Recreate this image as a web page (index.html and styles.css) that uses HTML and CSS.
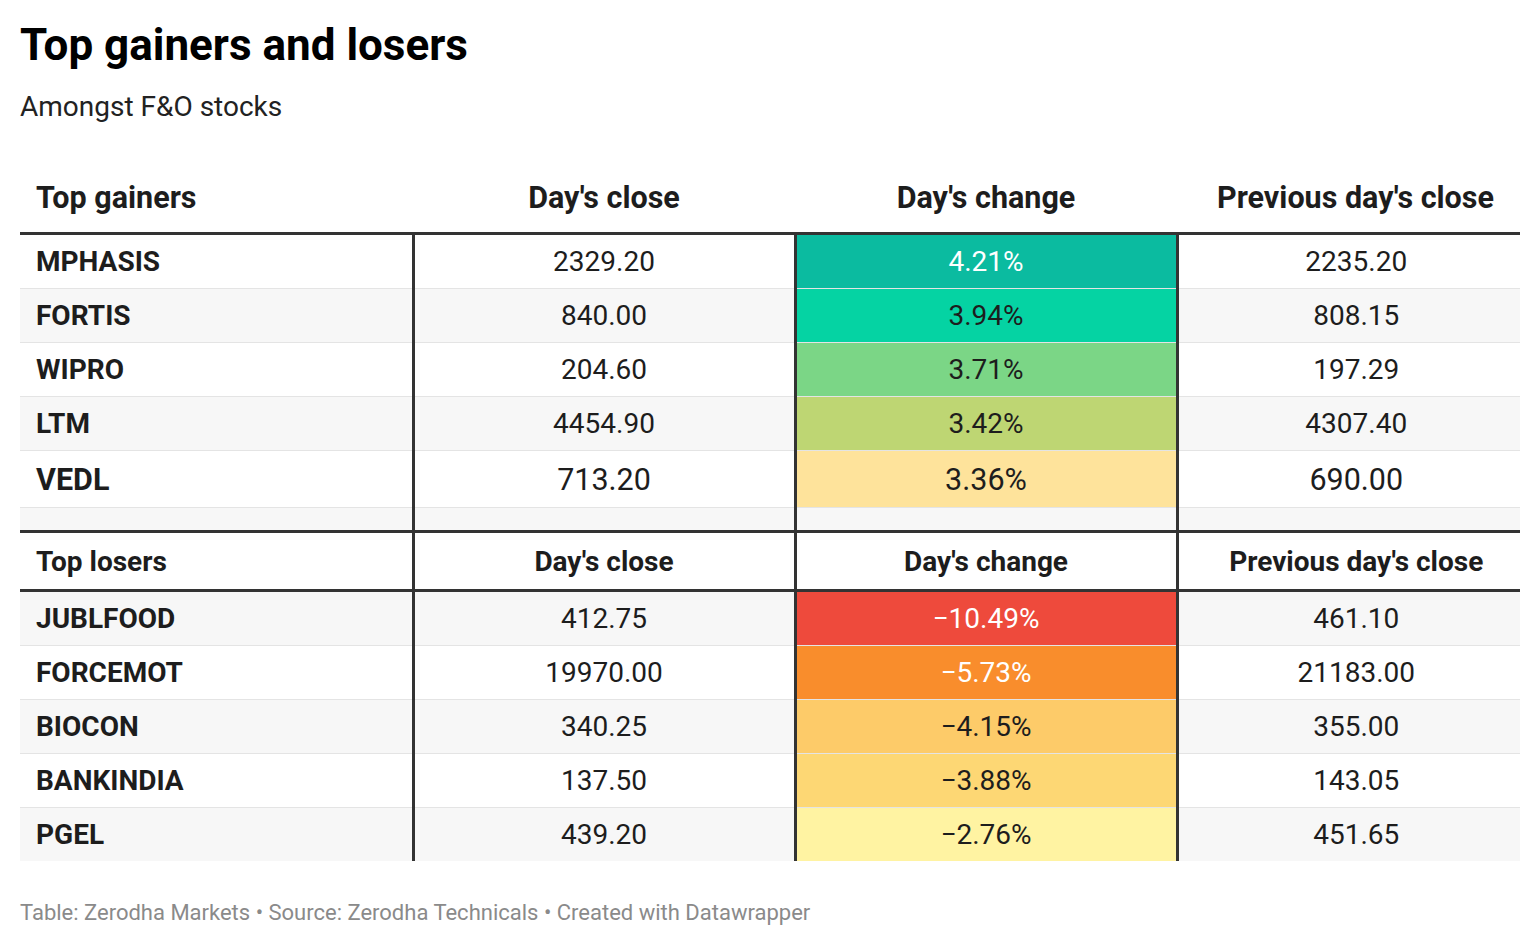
FILE: index.html
```html
<!DOCTYPE html>
<html>
<head>
<meta charset="utf-8">
<link rel="stylesheet" href="styles.css">
</head>
<body>
<div class="page">
  <h1 class="title">Top gainers and losers</h1>
  <p class="subtitle">Amongst F&amp;O stocks</p>
  <table class="tbl">
    <colgroup>
      <col class="c1"><col class="c2"><col class="c3"><col class="c4">
    </colgroup>
    <thead>
      <tr class="head-main">
        <th class="name">Top gainers</th>
        <th>Day's close</th>
        <th>Day's change</th>
        <th class="last-col">Previous day's close</th>
      </tr>
    </thead>
    <tbody>
      <tr class="row"><td class="name">MPHASIS</td><td>2329.20</td><td class="chg light" style="background:#0bbba0">4.21%</td><td class="last-col">2235.20</td></tr>
      <tr class="row alt"><td class="name">FORTIS</td><td>840.00</td><td class="chg" style="background:#05d3a3">3.94%</td><td class="last-col">808.15</td></tr>
      <tr class="row"><td class="name">WIPRO</td><td>204.60</td><td class="chg" style="background:#7bd686">3.71%</td><td class="last-col">197.29</td></tr>
      <tr class="row alt"><td class="name">LTM</td><td>4454.90</td><td class="chg" style="background:#bed673">3.42%</td><td class="last-col">4307.40</td></tr>
      <tr class="row big"><td class="name">VEDL</td><td>713.20</td><td class="chg" style="background:#fee39b">3.36%</td><td class="last-col">690.00</td></tr>
      <tr class="blank alt"><td></td><td></td><td></td><td></td></tr>
      <tr class="subhead"><td class="name">Top losers</td><td>Day's close</td><td>Day's change</td><td class="last-col">Previous day's close</td></tr>
      <tr class="row alt first"><td class="name">JUBLFOOD</td><td>412.75</td><td class="chg light" style="background:#ee4a3c">−10.49%</td><td class="last-col">461.10</td></tr>
      <tr class="row"><td class="name">FORCEMOT</td><td>19970.00</td><td class="chg light" style="background:#f98d2c">−5.73%</td><td class="last-col">21183.00</td></tr>
      <tr class="row alt"><td class="name">BIOCON</td><td>340.25</td><td class="chg" style="background:#fdcb69">−4.15%</td><td class="last-col">355.00</td></tr>
      <tr class="row"><td class="name">BANKINDIA</td><td>137.50</td><td class="chg" style="background:#fdd774">−3.88%</td><td class="last-col">143.05</td></tr>
      <tr class="row alt last"><td class="name">PGEL</td><td>439.20</td><td class="chg" style="background:#fff3a2">−2.76%</td><td class="last-col">451.65</td></tr>
    </tbody>
  </table>
  <p class="footer">Table: Zerodha Markets • Source: Zerodha Technicals • Created with Datawrapper</p>
</div>
</body>
</html>
```

FILE: styles.css
```css
html, body {
  margin: 0;
  padding: 0;
  background: #ffffff;
}
body {
  font-family: Roboto, "Liberation Sans", sans-serif;
  color: #1d1d1d;
}
.page {
  padding: 20px 20px 0 20px;
}
.title {
  margin: 0;
  font-size: 44px;
  font-weight: 700;
  line-height: 50px;
  color: #000;
}
.subtitle {
  margin: 20px 0 0 0;
  font-size: 28px;
  line-height: 34px;
  color: #222;
}
.tbl {
  margin-top: 36px;
  width: 1500px;
  border-collapse: collapse;
  table-layout: fixed;
}
.c1 { width: 393px; }
.c2 { width: 382px; }
.c3 { width: 382px; }
.c4 { width: 343px; }

.tbl th, .tbl td {
  padding: 0;
  text-align: center;
  vertical-align: middle;
}
.tbl .name {
  text-align: left;
  padding-left: 16px;
  font-weight: 700;
}
.tbl .last-col {
  padding-left: 14px;
}
.head-main th {
  height: 70px;
  font-size: 30.5px;
  font-weight: 700;
  color: #1d1d1d;
  border-bottom: 3px solid #333;
  padding-top: 2px;
}
.row td {
  height: 53px;
  font-size: 28px;
  border-bottom: 1px solid #e4e4e4;
  color: #1d1d1d;
}
.row td + td {
  border-left: 3px solid #333;
}
.row.big td {
  height: 56px;
  font-size: 30.5px;
}
.alt td {
  background: #f7f7f7;
}
.chg.light {
  color: #fff;
}
.blank td {
  height: 22px;
  border-bottom: 3px solid #333;
}
.blank td + td {
  border-left: 3px solid #333;
}
.subhead td {
  height: 56px;
  font-size: 28px;
  font-weight: 700;
  border-bottom: 3px solid #333;
}
.subhead td + td {
  border-left: 3px solid #333;
}
.row.last td {
  border-bottom: none;
}
.footer {
  margin: 39px 0 0 0;
  font-size: 22px;
  color: #8a8a8a;
  line-height: 26px;
}
```
